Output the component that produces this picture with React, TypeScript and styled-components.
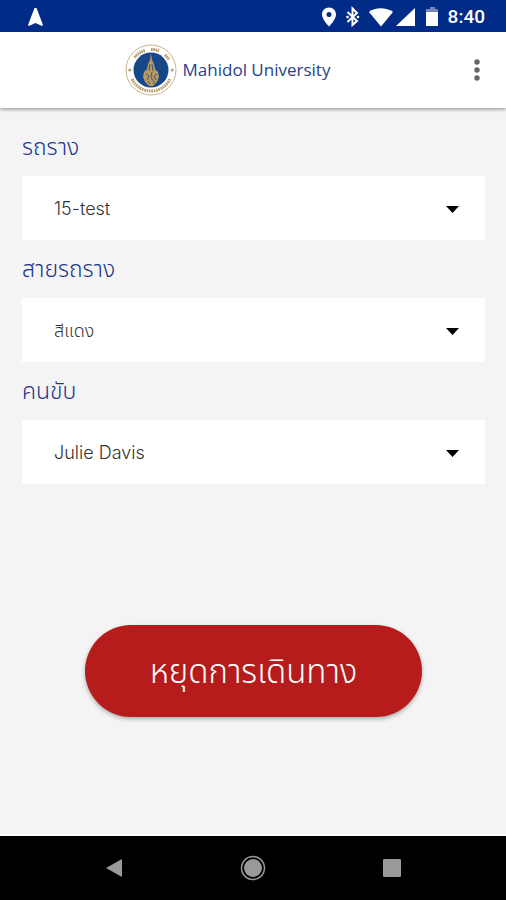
import React, { useId } from 'react';
import styled, { createGlobalStyle } from 'styled-components';

const GlobalStyle = createGlobalStyle`
  *, *::before, *::after { box-sizing: border-box; }
  body { margin: 0; background: #f4f4f4; }
  button, select { font-family: inherit; }
`;

const Screen = styled.div`
  min-height: 100vh;
  display: flex;
  flex-direction: column;
  background: #f4f4f4;
  font-family: Inter, 'Noto Sans Thai', 'Noto Sans', sans-serif;
  font-weight: 300;
`;

const StatusBar = styled.div`
  height: 32px;
  flex: none;
  display: flex;
  align-items: center;
  justify-content: space-between;
  padding: 2px 21px 0 27px;
  background: #002b87;
  color: #fff;
`;

const StatusIcons = styled.div`
  display: flex;
  align-items: center;
  svg { display: block; }
`;

const Clock = styled.time`
  margin-left: 9px;
  font: 500 19px/24px Roboto, sans-serif;
`;

const Header = styled.header`
  height: 76px;
  flex: none;
  display: flex;
  align-items: center;
  padding-right: 5px;
  background: #fff;
  box-shadow: 0 2px 3px rgba(0, 0, 0, 0.3);
`;

const Brand = styled.div`
  flex: 1;
  display: flex;
  align-items: center;
  justify-content: center;
  gap: 6px;
  padding-left: 2px;
`;

const BrandName = styled.h1`
  margin: 0;
  color: #26428b;
  font: 400 17px/24px 'Open Sans', sans-serif;
`;

const MenuButton = styled.button`
  width: 48px;
  height: 48px;
  padding: 0;
  display: grid;
  place-items: center;
  border: 0;
  background: none;
`;

const Form = styled.form`
  flex: 1;
  display: flex;
  flex-direction: column;
  padding: 10px 21px 40px 22px;
`;

const Label = styled.label`
  color: #22358d;
  font-size: 23px;
  line-height: 58px;
`;

const SelectWrap = styled.div`
  position: relative;
  height: 64px;
  svg {
    position: absolute;
    right: 26px;
    top: 30px;
    pointer-events: none;
  }
`;

const Select = styled.select`
  width: 100%;
  height: 100%;
  padding: 0 56px 0 32px;
  appearance: none;
  border: 0;
  border-radius: 0;
  background: #fff;
  color: #333;
  font-size: 18px;
  font-weight: 300;
`;

const StopButton = styled.button`
  align-self: center;
  width: 73%;
  height: 92px;
  margin-top: 141px;
  padding: 0;
  border: 0;
  border-radius: 46px;
  background: #b71c1c;
  box-shadow: 0 2px 4px rgba(0, 0, 0, 0.3);
  color: #fff;
  font-size: 33px;
  font-weight: 300;
  line-height: 48px;
`;

const NavBar = styled.nav`
  height: 66px;
  flex: none;
  display: flex;
  align-items: center;
  justify-content: center;
  gap: 91px;
  border-top: 2px solid #fff;
  background: #000;
`;

const NavButton = styled.button`
  width: 48px;
  height: 48px;
  padding: 0;
  display: grid;
  place-items: center;
  border: 0;
  background: none;
`;

function Emblem() {
  return (
    <svg width="52" height="52" viewBox="0 0 52 52" aria-hidden="true">
      <circle cx="26" cy="26" r="25" fill="#fff" stroke="#c9b58c" strokeWidth="1" />
      <circle cx="26" cy="26" r="17.5" fill="#174689" />
      <g fill="none" stroke="#b59b68" strokeWidth="3">
        <path d="M9.5 13.5a20.5 20.5 0 0 1 10.500-7" strokeDasharray="1.6 .6" />
        <path d="M26 5.5a20.5 20.5 0 0 1 8 1.4" strokeDasharray="1.6 .6" />
        <path d="M40 10.8a20.5 20.5 0 0 1 4 5" strokeDasharray="1.6 .6" />
        <path d="M7 35a21 21 0 0 0 38 0" strokeDasharray="1.6 .8" />
      </g>
      <g fill="#b59b68">
        <circle cx="4.8" cy="26" r="1.5" />
        <circle cx="47.2" cy="26" r="1.5" />
      </g>
      <path d="M26 9l1 7 2 4 1 5 3 3 1 5-2 5-4 4h-4l-4-4-2-5 1-5 3-3 1-5 2-4z" fill="#b79a60" />
      <path d="M25 20l-1 7m3-7 1 7m-7 3 3 2-2 4m5-8-1 5 2 4m4-7-3 2 2 4m-8 1 2 3m5-3-2 3" fill="none" stroke="#405879" strokeWidth="1" />
    </svg>
  );
}

function SelectField({ label, options }: { label: string; options: string[] }) {
  const id = useId();
  return (
    <>
      <Label htmlFor={id}>{label}</Label>
      <SelectWrap>
        <Select id={id}>
          {options.map((option) => <option key={option}>{option}</option>)}
        </Select>
        <svg width="13" height="7" viewBox="0 0 13 7" aria-hidden="true">
          <path d="M0 0h13L6.5 7z" fill="#000" />
        </svg>
      </SelectWrap>
    </>
  );
}

export default function App() {
  return (
    <Screen>
      <GlobalStyle />
      <StatusBar>
        <svg width="17" height="18" viewBox="0 0 17 18" aria-hidden="true">
          <path d="M7.500 0h2L16 17l-1 1-6.500-3L2 18l-1-1z" fill="#fff" />
        </svg>
        <StatusIcons>
          <svg width="104" height="22" viewBox="0 0 104 22" aria-hidden="true" fill="#fff">
            <path fillRule="evenodd" d="M7 1.500c-4 0-7 3-7 7 0 5 7 12 7 12s7-7 7-12c0-4-3-7-7-7zm0 4.500a2.500 2.500 0 1 1 0 5 2.500 2.500 0 0 1 0-5z" />
            <path d="M25.500 6 35 15l-4.500 4V2.500L35 7l-9.500 9" fill="none" stroke="#fff" strokeWidth="2" />
            <circle cx="25.500" cy="11" r="1.300" />
            <circle cx="36" cy="11" r="1.300" />
            <path d="M47 6c6-5 17-5 24 0L59 20.500z" />
            <path d="M93 2v18H74z" />
          </svg>
          <svg width="13" height="22" viewBox="0 0 13 22" aria-hidden="true">
            <path d="M4 1h5v2h3v4H0V3h4z" fill="#7189bf" />
            <path d="M0 6h12v14H0z" fill="#fff" />
          </svg>
          <Clock>8:40</Clock>
        </StatusIcons>
      </StatusBar>
      <Header>
        <Brand>
          <Emblem />
          <BrandName>Mahidol University</BrandName>
        </Brand>
        <MenuButton type="button" aria-label="Menu">
          <svg width="6" height="22" viewBox="0 0 6 22" fill="#666">
            <circle cx="3" cy="3" r="2.700" />
            <circle cx="3" cy="11" r="2.700" />
            <circle cx="3" cy="19" r="2.700" />
          </svg>
        </MenuButton>
      </Header>
      <Form>
        <SelectField label="รถราง" options={['15-test']} />
        <SelectField label="สายรถราง" options={['สีแดง']} />
        <SelectField label="คนขับ" options={['Julie Davis']} />
        <StopButton type="button">หยุดการเดินทาง</StopButton>
      </Form>
      <NavBar>
        <NavButton type="button" aria-label="Back">
          <svg width="18" height="20" viewBox="0 0 18 20"><path d="M17 1v18L1 10z" fill="#999" /></svg>
        </NavButton>
        <NavButton type="button" aria-label="Home">
          <svg width="26" height="26" viewBox="0 0 26 26">
            <circle cx="13" cy="13" r="11.500" fill="none" stroke="#999" strokeWidth="1.500" />
            <circle cx="13" cy="13" r="9" fill="#999" />
          </svg>
        </NavButton>
        <NavButton type="button" aria-label="Recent apps">
          <svg width="18" height="18" viewBox="0 0 18 18"><rect width="18" height="18" rx="1" fill="#999" /></svg>
        </NavButton>
      </NavBar>
    </Screen>
  );
}
